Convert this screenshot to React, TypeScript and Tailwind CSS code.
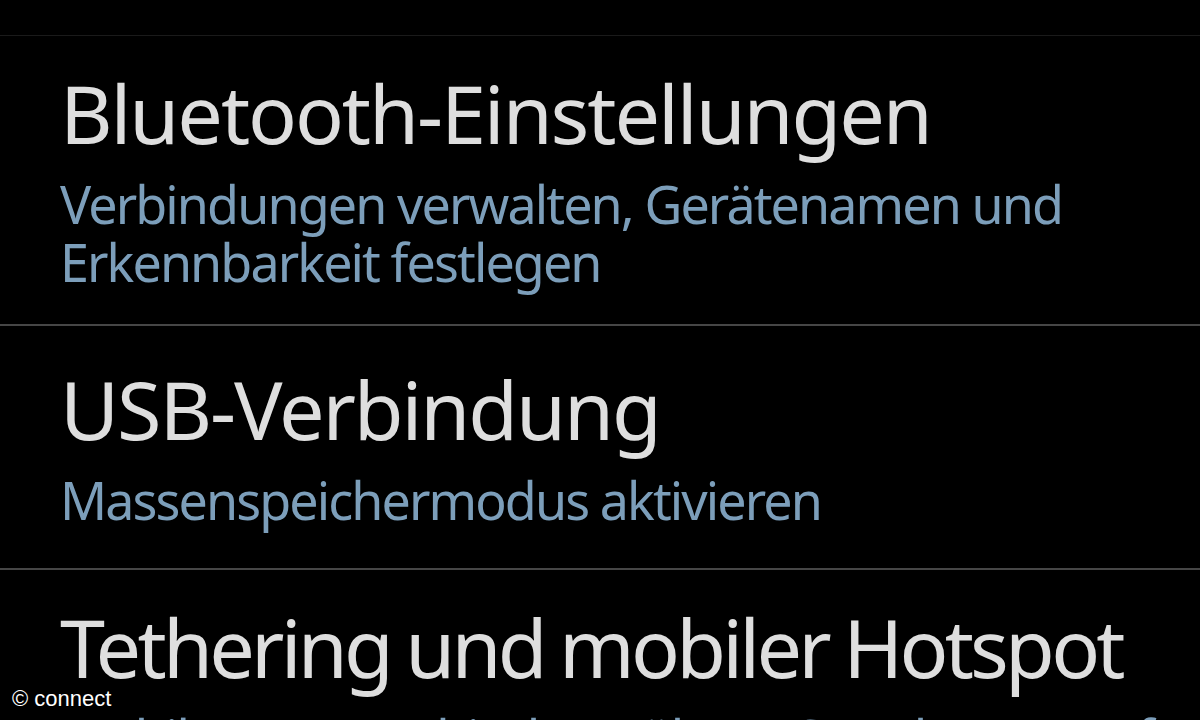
const items = [
  {
    title: "Bluetooth-Einstellungen",
    summary: ["Verbindungen verwalten, Gerätenamen und", "Erkennbarkeit festlegen"],
    pad: "pt-[32px] pb-[33px]",
    tight: "tracking-[-2.1px]",
  },
  {
    title: "USB-Verbindung",
    summary: ["Massenspeichermodus aktivieren"],
    pad: "pt-[38px] pb-[39px]",
    tight: "tracking-[-2.1px]",
  },
  {
    title: "Tethering und mobiler Hotspot",
    summary: ["Mobile Datenverbindung über USB oder WLAN freigeben"],
    pad: "pt-[32px] pb-[33px]",
    tight: "tracking-[-3.8px] [word-spacing:-2px]",
  },
];

type Item = { title: string; summary: string[]; pad: string; tight: string };

function SettingRow({ title, summary, pad, tight }: Item) {
  return (
    <div className={`pl-[60px] ${pad}`}>
      <div className={`whitespace-nowrap text-[81px] leading-[90px] text-[#dedede] ${tight}`}>
        {title}
      </div>
      <div className="mt-[17px] text-[52px] leading-[58px] tracking-[-1.9px] text-[#7c9eba]">
        {summary.map((line) => (
          <div key={line} className="whitespace-nowrap">
            {line}
          </div>
        ))}
      </div>
    </div>
  );
}

export default function App() {
  return (
    <div
      className="relative h-[720px] w-[1200px] overflow-hidden bg-black"
      style={{ fontFamily: '"Noto Sans", "Open Sans", sans-serif' }}
    >
      <div className="h-[35px]" />
      <div className="h-px bg-[#1a1a1a]" />
      {items.map((item, i) => (
        <div key={item.title}>
          <SettingRow {...item} />
          {i < items.length - 1 && <div className="h-[2px] bg-[#464646]" />}
        </div>
      ))}
      <div
        className="absolute bottom-[10px] left-[12px] text-[22px] leading-none text-white"
        style={{ fontFamily: '"Liberation Sans", Arial, sans-serif' }}
      >
        © connect
      </div>
    </div>
  );
}
